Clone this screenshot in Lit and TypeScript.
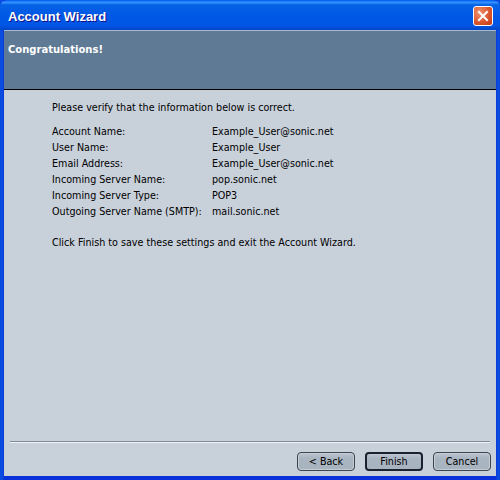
import { LitElement, html, css } from "lit";
import { customElement } from "lit/decorators.js";

const rows: [string, string][] = [
  ["Account Name:", "Example_User@sonic.net"],
  ["User Name:", "Example_User"],
  ["Email Address:", "Example_User@sonic.net"],
  ["Incoming Server Name:", "pop.sonic.net"],
  ["Incoming Server Type:", "POP3"],
  ["Outgoing Server Name (SMTP):", "mail.sonic.net"],
];

@customElement("app-root")
export class AppRoot extends LitElement {
  static styles = css`
    :host {
      display: flex;
      flex-direction: column;
      width: 500px;
      height: 480px;
      overflow: hidden;
      font-family: "DejaVu Sans", sans-serif;
      font-size: 9.6px;
      color: #000;
      background: linear-gradient(90deg, #0a4be0 0, #0a4be0 3px, #0831d9 4px, #0831d9 496px, #0a4be0 497px);
    }
    .titlebar {
      height: 30px;
      flex: none;
      display: flex;
      align-items: center;
      justify-content: space-between;
      padding: 2px 7px 0 8px;
      box-sizing: border-box;
      border-radius: 7px 7px 0 0;
      background: linear-gradient(180deg, #0058ee 0%, #3593ff 8%, #0663e5 16%, #0058e6 50%, #0055e5 85%, #0046c8 100%);
    }
    .title {
      color: #fff;
      font-family: "Liberation Sans", Arial, sans-serif;
      font-weight: 700;
      font-size: 13px;
      text-shadow: 1px 1px 0 #0f1089;
    }
    .close {
      width: 20px;
      height: 20px;
      box-sizing: border-box;
      border: 1px solid #fff;
      border-radius: 3px;
      background: radial-gradient(circle at 30% 30%, #f0906c, #d9532a 60%, #c13a16);
      display: flex;
      align-items: center;
      justify-content: center;
    }
    .client {
      flex: 1;
      display: flex;
      flex-direction: column;
      margin: 0 4px 4px 4px;
      min-height: 0;
      background: #c8d0da;
    }
    .banner {
      height: 60px;
      flex: none;
      box-sizing: border-box;
      background: #5f7a94;
      border-top: 1px solid #a8b8d0;
      border-bottom: 1px solid #000;
      padding: 11px 0 0 4px;
      color: #fff;
      font-weight: 700;
      font-size: 10px;
      line-height: 16px;
    }
    .content {
      flex: 1;
      padding: 10px 0 0 48px;
      line-height: 16px;
    }
    .grid {
      display: grid;
      grid-template-columns: 160px auto;
      grid-auto-rows: 16.1px;
      margin: 8px 0 14px;
      white-space: nowrap;
    }
    .sep {
      flex: none;
      height: 2px;
      margin: 0 6px;
      background: linear-gradient(180deg, #7f8a98 50%, #f0f2f5 50%);
    }
    .buttons {
      flex: none;
      height: 33px;
      display: flex;
      justify-content: flex-end;
      gap: 10px;
      padding: 9px 5px 0 0;
      box-sizing: border-box;
    }
    .btn {
      width: 58px;
      height: 19px;
      box-sizing: border-box;
      border: 1px solid #3c4450;
      border-radius: 4px;
      background: linear-gradient(180deg, #bcc5d0 0%, #aab5c2 30%, #a8b3c0 100%);
      box-shadow: inset 0 0 0 1px #c4ccd6;
      display: flex;
      align-items: center;
      justify-content: center;
      font: inherit;
      padding: 0;
    }
    .btn.default {
      border: 2px solid #1a2230;
      box-shadow: none;
    }
  `;

  render() {
    return html`
      <div class="titlebar">
        <span class="title">Account Wizard</span>
        <div class="close">
          <svg width="12" height="12" viewBox="0 0 12 12">
            <path d="M2 2L10 10M10 2L2 10" stroke="#fff" stroke-width="2" stroke-linecap="square" fill="none" />
          </svg>
        </div>
      </div>
      <div class="client">
        <div class="banner">Congratulations!</div>
        <div class="content">
          <div>Please verify that the information below is correct.</div>
          <div class="grid">
            ${rows.map(([a, b]) => html`<div>${a}</div><div>${b}</div>`)}
          </div>
          <div>Click Finish to save these settings and exit the Account Wizard.</div>
        </div>
        <div class="sep"></div>
        <div class="buttons">
          <button class="btn">&lt; Back</button>
          <button class="btn default">Finish</button>
          <button class="btn">Cancel</button>
        </div>
      </div>
    `;
  }
}
